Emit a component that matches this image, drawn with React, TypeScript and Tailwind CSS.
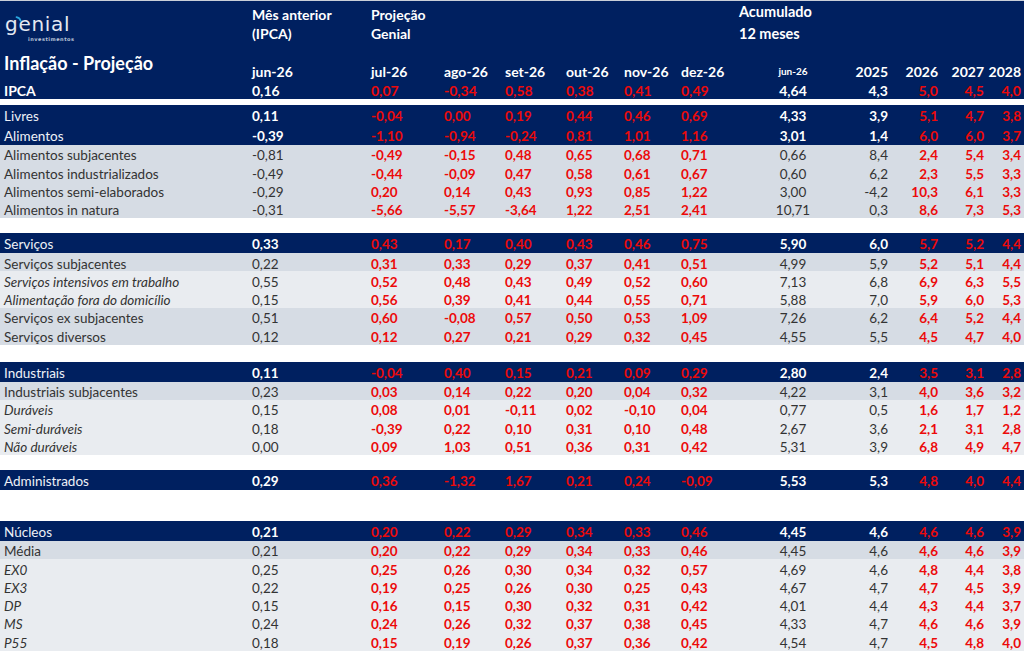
import React from "react";

type Kind = "navy" | "dark" | "light";
type Row = {
  kind: Kind;
  label: string;
  italic?: boolean;
  m: string;
  mo: string[];
  acc: string;
  y25: string;
  ys: string[];
};
type Item = Row | { gap: number };

const R = (
  kind: Kind,
  label: string,
  m: string,
  mo: string[],
  acc: string,
  y25: string,
  ys: string[],
  italic = false
): Row => ({ kind, label, m, mo, acc, y25, ys, italic });

const items: Item[] = [
  R("navy", "Livres", "0,11", ["-0,04", "0,00", "0,19", "0,44", "0,46", "0,69"], "4,33", "3,9", ["5,1", "4,7", "3,8"]),
  R("navy", "Alimentos", "-0,39", ["-1,10", "-0,94", "-0,24", "0,81", "1,01", "1,16"], "3,01", "1,4", ["6,0", "6,0", "3,7"]),
  R("dark", "Alimentos subjacentes", "-0,81", ["-0,49", "-0,15", "0,48", "0,65", "0,68", "0,71"], "0,66", "8,4", ["2,4", "5,4", "3,4"]),
  R("dark", "Alimentos industrializados", "-0,49", ["-0,44", "-0,09", "0,47", "0,58", "0,61", "0,67"], "0,60", "6,2", ["2,3", "5,5", "3,3"]),
  R("dark", "Alimentos semi-elaborados", "-0,29", ["0,20", "0,14", "0,43", "0,93", "0,85", "1,22"], "3,00", "-4,2", ["10,3", "6,1", "3,3"]),
  R("dark", "Alimentos in natura", "-0,31", ["-5,66", "-5,57", "-3,64", "1,22", "2,51", "2,41"], "10,71", "0,3", ["8,6", "7,3", "5,3"]),
  { gap: 15 },
  R("navy", "Serviços", "0,33", ["0,43", "0,17", "0,40", "0,43", "0,46", "0,75"], "5,90", "6,0", ["5,7", "5,2", "4,4"]),
  R("dark", "Serviços subjacentes", "0,22", ["0,31", "0,33", "0,29", "0,37", "0,41", "0,51"], "4,99", "5,9", ["5,2", "5,1", "4,4"]),
  R("light", "Serviços intensivos em trabalho", "0,55", ["0,52", "0,48", "0,43", "0,49", "0,52", "0,60"], "7,13", "6,8", ["6,9", "6,3", "5,5"], true),
  R("light", "Alimentação fora do domicílio", "0,15", ["0,56", "0,39", "0,41", "0,44", "0,55", "0,71"], "5,88", "7,0", ["5,9", "6,0", "5,3"], true),
  R("dark", "Serviços ex subjacentes", "0,51", ["0,60", "-0,08", "0,57", "0,50", "0,53", "1,09"], "7,26", "6,2", ["6,4", "5,2", "4,4"]),
  R("dark", "Serviços diversos", "0,12", ["0,12", "0,27", "0,21", "0,29", "0,32", "0,45"], "4,55", "5,5", ["4,5", "4,7", "4,0"]),
  { gap: 17 },
  R("navy", "Industriais", "0,11", ["-0,04", "0,40", "0,15", "0,21", "0,09", "0,29"], "2,80", "2,4", ["3,5", "3,1", "2,8"]),
  R("dark", "Industriais subjacentes", "0,23", ["0,03", "0,14", "0,22", "0,20", "0,04", "0,32"], "4,22", "3,1", ["4,0", "3,6", "3,2"]),
  R("light", "Duráveis", "0,15", ["0,08", "0,01", "-0,11", "0,02", "-0,10", "0,04"], "0,77", "0,5", ["1,6", "1,7", "1,2"], true),
  R("light", "Semi-duráveis", "0,18", ["-0,39", "0,22", "0,10", "0,31", "0,10", "0,48"], "2,67", "3,6", ["2,1", "3,1", "2,8"], true),
  R("light", "Não duráveis", "0,00", ["0,09", "1,03", "0,51", "0,36", "0,31", "0,42"], "5,31", "3,9", ["6,8", "4,9", "4,7"], true),
  { gap: 15 },
  R("navy", "Administrados", "0,29", ["0,36", "-1,32", "1,67", "0,21", "0,24", "-0,09"], "5,53", "5,3", ["4,8", "4,0", "4,4"]),
  { gap: 31 },
  R("navy", "Núcleos", "0,21", ["0,20", "0,22", "0,29", "0,34", "0,33", "0,46"], "4,45", "4,6", ["4,6", "4,6", "3,9"]),
  R("dark", "Média", "0,21", ["0,20", "0,22", "0,29", "0,34", "0,33", "0,46"], "4,45", "4,6", ["4,6", "4,6", "3,9"]),
  R("light", "EX0", "0,25", ["0,25", "0,26", "0,30", "0,34", "0,32", "0,57"], "4,69", "4,6", ["4,8", "4,4", "3,8"], true),
  R("light", "EX3", "0,22", ["0,19", "0,25", "0,26", "0,30", "0,25", "0,43"], "4,67", "4,7", ["4,7", "4,5", "3,9"], true),
  R("light", "DP", "0,15", ["0,16", "0,15", "0,30", "0,32", "0,31", "0,42"], "4,01", "4,4", ["4,3", "4,4", "3,7"], true),
  R("light", "MS", "0,24", ["0,24", "0,26", "0,32", "0,37", "0,38", "0,45"], "4,33", "4,7", ["4,6", "4,6", "3,9"], true),
  R("light", "P55", "0,18", ["0,15", "0,19", "0,26", "0,37", "0,36", "0,42"], "4,54", "4,7", ["4,5", "4,8", "4,0"], true),
];

const GRID =
  "grid grid-cols-[252px_119px_73px_61px_61px_58px_57px_79px_66px_66px_50px_46px_36px]";

const RED = "text-[#ec0a0a]";

function DataRow({ r }: { r: Row }) {
  const navy = r.kind === "navy";
  const bg = navy ? "bg-[#002060]" : r.kind === "dark" ? "bg-[#d6dce4]" : "bg-[#e9ecf0]";
  const h = navy ? "h-[20px]" : "h-[18.3px]";
  const base = navy ? "text-white" : "text-[#333333]";
  const valW = navy ? "font-bold" : "font-normal";
  return (
    <div className={`${GRID} ${bg} ${h} pt-[4px] items-center text-[13.5px] leading-none`}>
      <div className={`pl-[4px] whitespace-nowrap ${navy ? "text-[#eef1f7]" : "text-[#333333]"} ${r.italic ? "italic" : ""}`}>
        {r.label}
      </div>
      <div className={`${base} ${valW}`}>{r.m}</div>
      {r.mo.map((v, i) => (
        <div key={i} className={`${RED} font-bold`}>
          {v}
        </div>
      ))}
      <div className={`${base} ${valW} text-center`}>{r.acc}</div>
      <div className={`${base} ${valW} text-right pr-[4px]`}>{r.y25}</div>
      {r.ys.map((v, i) => (
        <div key={i} className={`${RED} font-bold text-right ${i === 2 ? "pr-[3px]" : "pr-[4px]"}`}>
          {v}
        </div>
      ))}
    </div>
  );
}

function Logo() {
  return (
    <div className="relative w-[72px] h-[28px]">
      <div className="absolute left-[1px] top-[-2px] text-[20px] leading-[26px] tracking-[0.7px] font-normal text-[#e4e9f2] [font-family:'DejaVu_Sans',sans-serif]">
        genial
      </div>
      <svg className="absolute left-[11px] top-[3px]" width="8" height="6" viewBox="0 0 8 6">
        <path d="M1.5 1.2 C3.5 1.5 5 2.8 5.6 4.8" stroke="#2aa7e0" strokeWidth="1.7" fill="none" strokeLinecap="round" />
      </svg>
      <div className="absolute left-[24px] top-[23px] text-[5px] leading-[6px] tracking-[0.5px] text-[#b9c4d8] [font-family:'DejaVu_Sans',sans-serif]">
        investimentos
      </div>
    </div>
  );
}

export default function App() {
  return (
    <div className="w-[1024px] h-[652px] overflow-hidden bg-white [font-family:Lato,'Liberation_Sans',sans-serif]">
      {/* Header */}
      <div className="bg-[#002060] border-t border-[#c9ced8]">
        <div className={`${GRID} grid-rows-[60px_19px] text-white font-bold text-[14px]`}>
          <div className="row-span-2 pl-[4px] flex flex-col">
            <div className="pt-[12px]">
              <Logo />
            </div>
            <div className="mt-[12px] text-[18px] leading-[20px] whitespace-nowrap">Inflação - Projeção</div>
          </div>
          <div className="pt-[4px] leading-[19px]">
            <div className="whitespace-nowrap">Mês anterior</div>
            <div>(IPCA)</div>
          </div>
          <div className="pt-[4px] leading-[19px] col-span-6">
            <div>Projeção</div>
            <div>Genial</div>
          </div>
          <div className="col-span-5 leading-[22px] pl-[58px] -ml-[79px] pt-[0px] text-[14.5px]">
            <div>Acumulado</div>
            <div>12 meses</div>
          </div>
          <div className="flex items-center pt-[2px]">jun-26</div>
          <div className="flex items-center pt-[2px]">jul-26</div>
          <div className="flex items-center pt-[2px]">ago-26</div>
          <div className="flex items-center pt-[2px]">set-26</div>
          <div className="flex items-center pt-[2px]">out-26</div>
          <div className="flex items-center pt-[2px]">nov-26</div>
          <div className="flex items-center pt-[2px]">dez-26</div>
          <div className="flex items-center justify-center pt-[2px] text-[10px]">jun-26</div>
          <div className="flex items-center justify-end pt-[2px] pr-[4px]">2025</div>
          <div className="flex items-center justify-end pt-[2px] pr-[4px]">2026</div>
          <div className="flex items-center justify-end pt-[2px] pr-[4px]">2027</div>
          <div className="flex items-center justify-end pt-[2px] pr-[3px]">2028</div>
        </div>
        <div className={`${GRID} h-[19px] pt-[2px] items-center text-[14px] font-bold leading-none text-white`}>
          <div className="pl-[4px]">IPCA</div>
          <div>0,16</div>
          {["0,07", "-0,34", "0,58", "0,38", "0,41", "0,49"].map((v, i) => (
            <div key={i} className={RED}>
              {v}
            </div>
          ))}
          <div className="text-center">4,64</div>
          <div className="text-right pr-[4px]">4,3</div>
          <div className={`${RED} text-right pr-[4px]`}>5,0</div>
          <div className={`${RED} text-right pr-[4px]`}>4,5</div>
          <div className={`${RED} text-right pr-[3px]`}>4,0</div>
        </div>
      </div>
      <div className="h-[6px]" />
      {items.map((it, i) =>
        "gap" in it ? (
          <div key={i} style={{ height: it.gap }} />
        ) : (
          <DataRow key={i} r={it} />
        )
      )}
    </div>
  );
}
